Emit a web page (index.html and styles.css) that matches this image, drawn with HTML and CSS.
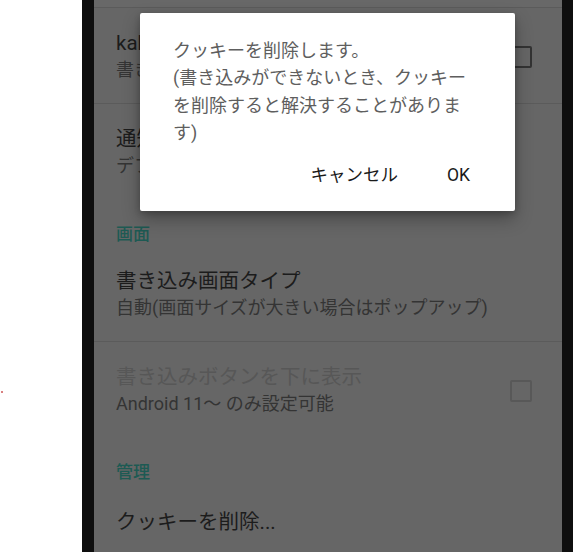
FILE: index.html
```html
<!DOCTYPE html>
<html lang="ja">
<head>
<meta charset="utf-8">
<link rel="stylesheet" href="styles.css">
</head>
<body>
<div class="page">
  <div class="margin-left"><span class="dot"></span></div>
  <div class="bezel bezel-left"></div>
  <div class="screen">
    <div class="prev-tail"></div>
    <div class="divider"></div>
    <div class="item">
      <div class="texts">
        <div class="title">kakikomi</div>
        <div class="summary">書き込み時に確認する</div>
      </div>
      <span class="checkbox"></span>
    </div>
    <div class="divider"></div>
    <div class="item">
      <div class="texts">
        <div class="title">通知の設定</div>
        <div class="summary">デフォルト</div>
      </div>
    </div>
    <div class="category">画面</div>
    <div class="item">
      <div class="texts">
        <div class="title">書き込み画面タイプ</div>
        <div class="summary">自動(画面サイズが大きい場合はポップアップ)</div>
      </div>
    </div>
    <div class="divider"></div>
    <div class="item">
      <div class="texts">
        <div class="title disabled">書き込みボタンを下に表示</div>
        <div class="summary">Android 11〜 のみ設定可能</div>
      </div>
      <span class="checkbox checkbox-disabled"></span>
    </div>
    <div class="category category-second">管理</div>
    <div class="item item-single">
      <div class="texts">
        <div class="title">クッキーを削除...</div>
      </div>
    </div>

    <div class="dialog">
      <div class="message">クッキーを削除します。<br>(書き込みができないとき、クッキー<br>を削除すると解決することがありま<br>す)</div>
      <div class="actions">
        <span class="btn">キャンセル</span>
        <span class="btn">OK</span>
      </div>
    </div>
  </div>
  <div class="bezel bezel-right"></div>
</div>
</body>
</html>
```

FILE: styles.css
```css
html, body {
  margin: 0;
  padding: 0;
  background: #ffffff;
}

body {
  font-family: Roboto, "Noto Sans CJK JP", sans-serif;
}

.page {
  display: flex;
  width: 573px;
  height: 552px;
  overflow: hidden;
}

.margin-left {
  width: 82px;
  flex: none;
  background: #ffffff;
  position: relative;
}

.dot {
  position: absolute;
  left: 1px;
  top: 391px;
  width: 2px;
  height: 2px;
  background: #d98080;
}

.bezel {
  flex: none;
  background: #0e0e0e;
}

.bezel-left {
  width: 12px;
}

.bezel-right {
  width: 11px;
}

.screen {
  width: 468px;
  flex: none;
  background: #666666;
  position: relative;
  overflow: hidden;
}

.prev-tail {
  height: 7px;
  background: #686868;
}

.divider {
  height: 1px;
  background: #5b5b5b;
}

.item {
  display: flex;
  align-items: center;
  padding: 22px 30px 20px 22px;
}

.item-single {
  padding-top: 25px;
}

.texts {
  flex: 1;
  min-width: 0;
}

.title {
  font-size: 20.5px;
  line-height: 27px;
  color: #1c1c1c;
  white-space: nowrap;
}

.title.disabled {
  color: #575757;
}

.summary {
  font-size: 18px;
  line-height: 26px;
  color: #343434;
  white-space: nowrap;
}

.checkbox {
  flex: none;
  width: 18px;
  height: 18px;
  border: 2.5px solid #333333;
  border-radius: 2px;
  margin-left: 16px;
}

.checkbox-disabled {
  border-color: #585858;
}

.category {
  font-size: 17px;
  line-height: 24px;
  font-weight: 500;
  color: #1d5a53;
  padding: 23px 22px 0;
}

.category-second {
  padding-top: 23px;
}

.dialog {
  position: absolute;
  left: 46px;
  top: 13px;
  width: 375px;
  height: 198px;
  box-sizing: border-box;
  background: #ffffff;
  border-radius: 2px;
  box-shadow: 0 8px 18px rgba(0, 0, 0, 0.3), 0 2px 6px rgba(0, 0, 0, 0.2);
  padding: 24px 24px 0 33px;
  display: flex;
  flex-direction: column;
}

.message {
  font-size: 18px;
  line-height: 27.3px;
  color: #5e5e5e;
  white-space: nowrap;
}

.actions {
  display: flex;
  justify-content: flex-end;
  gap: 25px;
  margin-top: 11px;
  margin-right: 9px;
}

.btn {
  font-size: 17.5px;
  line-height: 36px;
  font-weight: 400;
  color: #1a1a1a;
  padding: 0 12px;
}
```
